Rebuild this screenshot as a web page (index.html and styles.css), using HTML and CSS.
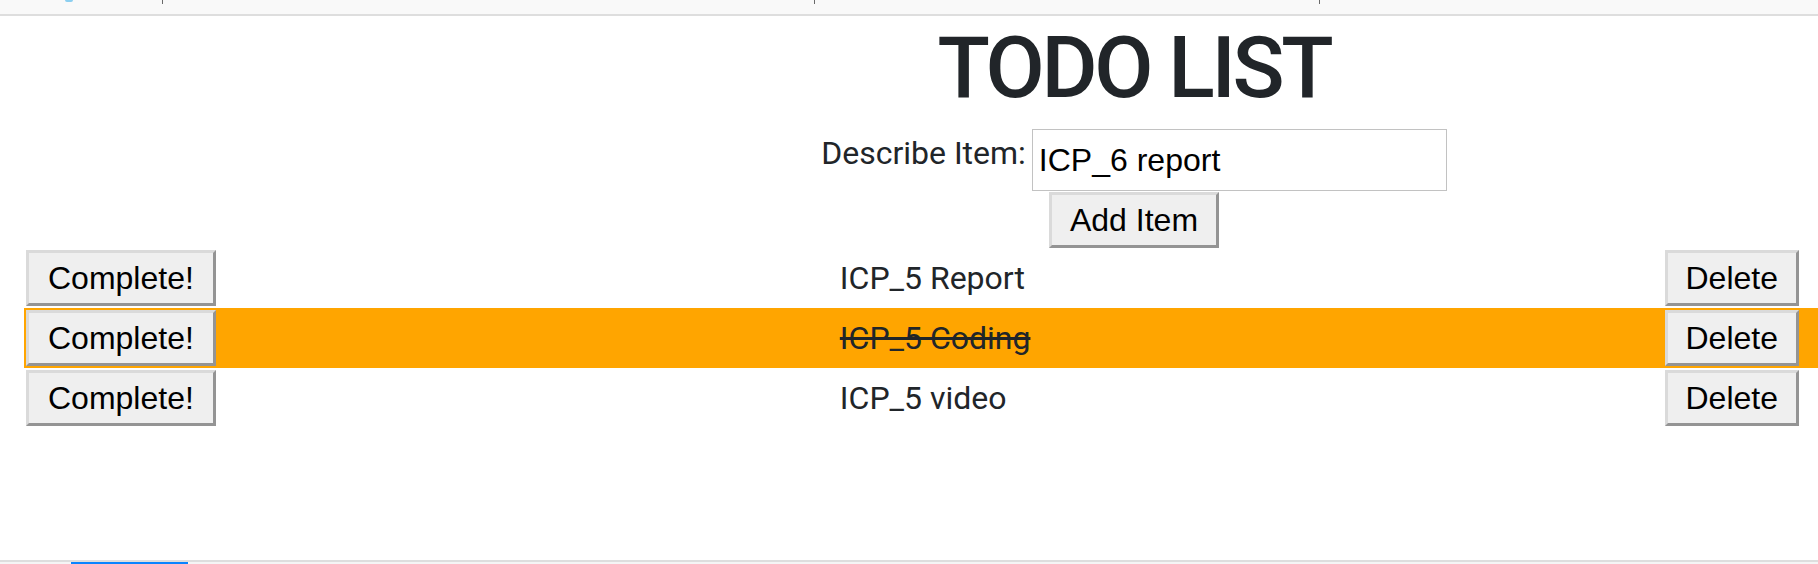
FILE: index.html
```html
<!DOCTYPE html>
<html>
<head>
<meta charset="utf-8">
<title>TODO LIST</title>
<link rel="stylesheet" href="styles.css">
</head>
<body>
<div class="topbar">
  <span class="tb-dot"></span>
  <span class="tb-sep sep1"></span>
  <span class="tb-sep sep2"></span>
  <span class="tb-sep sep3"></span>
</div>
<main class="page">
  <header class="header">
    <h1 class="title">TODO LIST</h1>
    <div class="form-line">
      <label class="label" for="desc">Describe Item:</label>
      <input class="input" id="desc" type="text" value="ICP_6 report">
    </div>
    <button class="btn add-btn">Add Item</button>
  </header>
  <section class="list">
    <div class="row">
      <button class="btn">Complete!</button>
      <span class="item">ICP_5 Report</span>
      <button class="btn">Delete</button>
    </div>
    <div class="row done">
      <button class="btn">Complete!</button>
      <span class="item">ICP_5 Coding</span>
      <button class="btn">Delete</button>
    </div>
    <div class="row">
      <button class="btn">Complete!</button>
      <span class="item">ICP_5 video</span>
      <button class="btn">Delete</button>
    </div>
  </section>
</main>
<div class="bottombar"><span class="tab-active"></span></div>
</body>
</html>
```

FILE: styles.css
```css
html, body {
  margin: 0;
  padding: 0;
  height: 564px;
  overflow: hidden;
  background: #ffffff;
}
body {
  display: flex;
  flex-direction: column;
  font-family: Roboto, "Liberation Sans", Arial, sans-serif;
  color: #212529;
}
.topbar {
  height: 14px;
  flex: none;
  background: #f9f9f9;
  border-bottom: 2px solid #dedede;
  position: relative;
}
.tb-sep {
  position: absolute;
  top: 0;
  width: 1px;
  height: 4px;
  background: #6a6a6a;
}
.sep1 { left: 162px; }
.sep2 { left: 814px; }
.sep3 { left: 1319px; }
.tb-dot {
  position: absolute;
  left: 65px;
  top: 0;
  width: 8px;
  height: 2px;
  border-radius: 0 0 4px 4px;
  background: #8ccff0;
}
.page {
  flex: 1;
  overflow: hidden;
}
.header {
  margin-left: 450px;
  display: flex;
  flex-direction: column;
  align-items: center;
}
.title {
  margin: 4px 0 14px 0;
  font-family: Roboto, "Liberation Sans", sans-serif;
  font-weight: 500;
  font-size: 86px;
  line-height: 95px;
  letter-spacing: -3.3px;
  color: #212529;
}
.form-line {
  display: flex;
  align-items: flex-start;
}
.label {
  font-size: 32px;
  line-height: 38px;
  padding-top: 5px;
  margin-right: 2px;
  color: #212529;
}
.input {
  box-sizing: border-box;
  width: 415px;
  height: 62px;
  margin: 0 0 0 4px;
  padding: 0 6px;
  border: 1px solid #c2c2c2;
  font-family: "Liberation Sans", Arial, sans-serif;
  font-size: 32px;
  color: #000;
  background: #fff;
}
.btn {
  box-sizing: border-box;
  height: 56px;
  margin: 0;
  padding: 0 18px;
  border-style: solid;
  border-width: 3px;
  border-color: #dadada #949494 #949494 #dadada;
  background: #efefef;
  font-family: "Liberation Sans", Arial, sans-serif;
  font-size: 32px;
  color: #000;
}
.row .btn:first-child {
  padding: 0 19px;
}
.add-btn {
  margin-top: 1px;
}
.list {
  display: flex;
  flex-direction: column;
}
.row {
  display: flex;
  align-items: center;
  margin-left: 24px;
  padding: 2px 19px 2px 2px;
}
.row.done {
  background: #ffa500;
}
.item {
  flex: 1;
  margin-left: 624px;
  font-size: 32px;
  color: #212529;
}
.done .item {
  text-decoration: line-through;
}
.bottombar {
  flex: none;
  height: 2px;
  border-top: 2px solid #dedede;
  background: #f5f5f5;
  position: relative;
}
.tab-active {
  position: absolute;
  left: 71px;
  top: 0;
  width: 117px;
  height: 2px;
  background: #0a84ff;
}
```
